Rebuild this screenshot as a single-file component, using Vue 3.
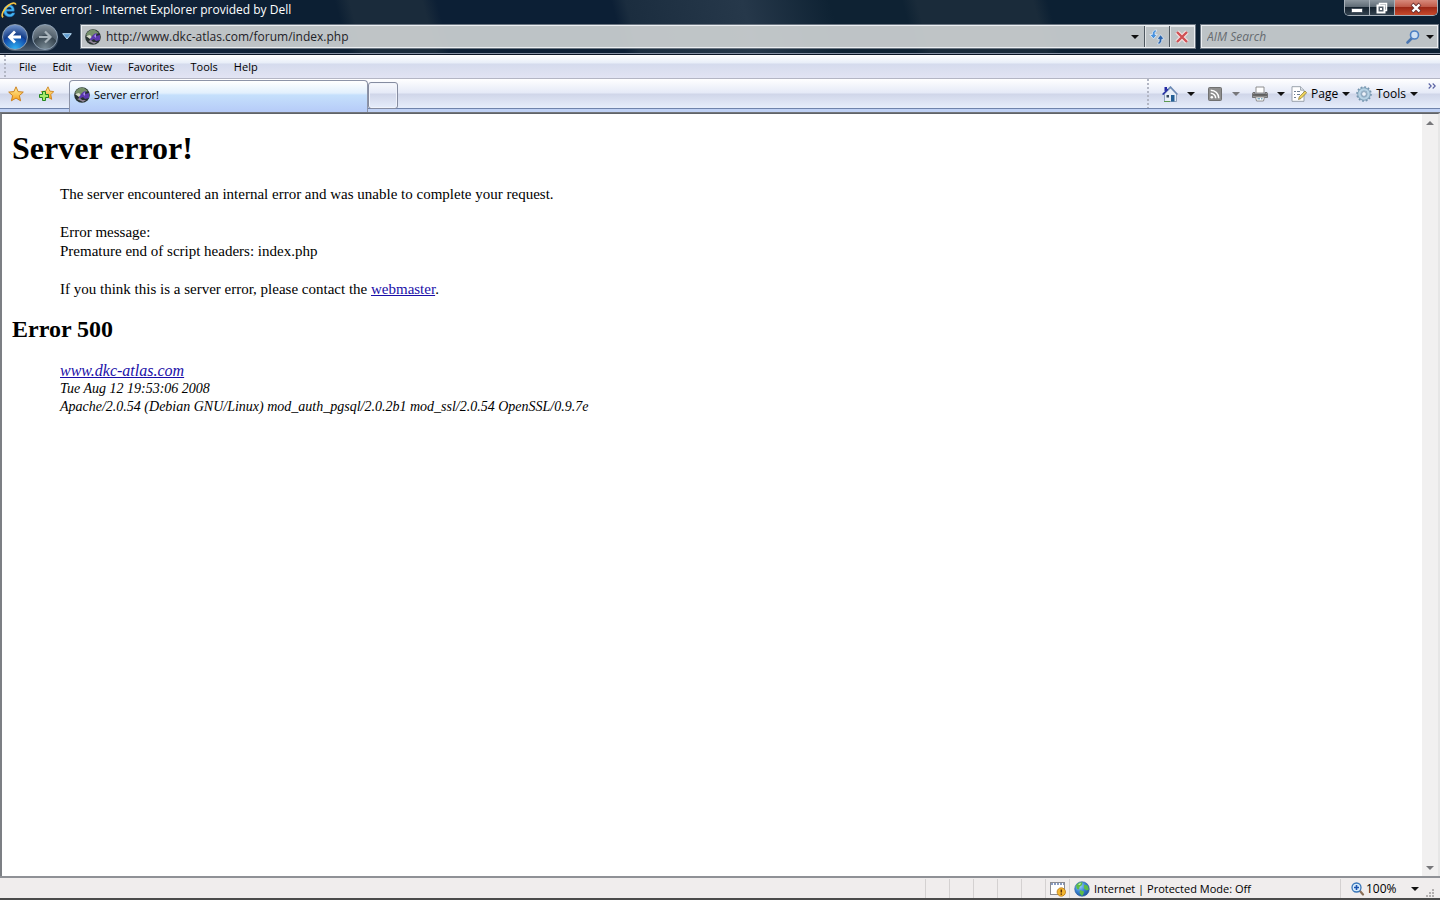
<template>
  <div class="browser">
    <header class="chrome">
      <div class="title-bar">
        <svg class="icon" viewBox="0 0 16 16">
          <path d="M13.2 9.2H5.6c.1 2 1.300 3 3 3 1.200 0 2-.5 2.500-1.300h2.800C13 13.500 11 14.800 8.500 14.800 5 14.800 2.700 12.400 2.700 9c0-3.500 2.400-6 5.700-6 3.400 0 5.300 2.600 4.800 6.200zM5.700 7.300h4.800C10.300 5.800 9.500 5 8.200 5c-1.400 0-2.300.9-2.500 2.300z" fill="#45b6f2" stroke="#1d6fc0" stroke-width=".5" />
          <path d="M2.200 15.300C-.5 13.500 2.500 7 7.500 3.200 11 .6 14.600.2 14.600 2.700" fill="none" stroke="#f5c544" stroke-width="1.700" />
        </svg>
        <h1 class="window-title">Server error! - Internet Explorer provided by Dell</h1>
        <div class="window-buttons">
          <button class="win-btn" aria-label="Minimize">
            <svg width="14" height="12" viewBox="0 0 14 12"><rect x="1.500" y="6.500" width="11" height="4" rx="1" fill="#fff" stroke="#444f5c" /></svg>
          </button>
          <button class="win-btn" aria-label="Restore">
            <svg width="14" height="12" viewBox="0 0 14 12">
              <path d="M4.500 3V1.500h7v7H10" fill="none" stroke="#fff" stroke-width="1.500" />
              <rect x="2.500" y="3.500" width="7" height="7" fill="#56616c" stroke="#fff" stroke-width="2" />
              <rect x="5" y="6" width="2" height="2" fill="#fff" />
            </svg>
          </button>
          <button class="win-btn close" aria-label="Close">
            <svg width="14" height="12" viewBox="0 0 14 12">
              <path d="M3 2l8 8M11 2l-8 8" stroke="#6b3030" stroke-width="4" />
              <path d="M3.500 2.500l7 7M10.500 2.500l-7 7" stroke="#fff" stroke-width="2.400" />
            </svg>
          </button>
        </div>
      </div>

      <div class="nav-bar">
        <div class="travel">
          <button class="round-btn back" aria-label="Back">
            <svg class="icon" viewBox="0 0 16 16"><path d="M8 2.500L2.500 8 8 13.500M3 8h11" fill="none" stroke="#fff" stroke-width="2.800" /></svg>
          </button>
          <button class="round-btn forward" aria-label="Forward">
            <svg class="icon" viewBox="0 0 16 16"><path d="M8 2.500L13.500 8 8 13.500M13 8H2" fill="none" stroke="#a9b4bc" stroke-width="2.200" /></svg>
          </button>
        </div>
        <button class="recent" aria-label="Recent pages">
          <svg width="10" height="7" viewBox="0 0 10 7"><path d="M.7.700h8.600L5 6z" fill="#5e9bd0" stroke="#b9dcf4" /></svg>
        </button>
        <div class="field address-bar">
          <svg class="icon favicon" viewBox="0 0 16 16"><use href="#site-mark" /></svg>
          <input v-model="url" class="url" type="text" aria-label="Address" />
          <button class="drop" aria-label="Show address list"><i class="caret"></i></button>
          <button class="field-btn" aria-label="Refresh">
            <svg class="icon" viewBox="0 0 16 16">
              <path d="M7.500.8C4.800.9 3.200 2.500 3.300 5.500H.8l3.700 4.300 3.700-4.300H6C5.900 3.800 6.300 2.800 7.500 2.300z" fill="#4a92dd" stroke="#edf5fd" stroke-width=".7" />
              <path d="M8.800 15.200c2.700-.1 4.200-1.700 4.100-5h2.300L11.600 5.700 7.900 10.200h2.300c.1 1.900-.2 2.900-1.400 3.500z" fill="#2a64ad" stroke="#edf5fd" stroke-width=".7" />
            </svg>
          </button>
          <button class="field-btn" aria-label="Stop">
            <svg class="icon" viewBox="0 0 16 16">
              <path d="M3 3l10 10M13 3L3 13" stroke="#f5e3e3" stroke-width="4.500" />
              <path d="M3 3l10 10M13 3L3 13" stroke="#cf5054" stroke-width="2.400" />
            </svg>
          </button>
        </div>
        <div class="field search-bar">
          <input v-model="query" class="search" type="text" placeholder="AIM Search" aria-label="Search" />
          <button class="search-btn" aria-label="Go">
            <svg class="icon" viewBox="0 0 16 16">
              <path d="M2.500 13.500l4.500-4.500" stroke="#4b76b0" stroke-width="2.600" stroke-linecap="round" />
              <circle cx="9.500" cy="6" r="4" fill="#cfe0f3" stroke="#4b7fc4" stroke-width="1.600" />
            </svg>
          </button>
          <button class="search-btn options" aria-label="Search options"><i class="caret"></i></button>
        </div>
      </div>
    </header>

    <nav class="menu-bar">
      <i class="grip"></i>
      <button v-for="item in menus" :key="item" class="menu-item">{{ item }}</button>
    </nav>

    <div class="command-bar">
      <div class="favorites">
        <button aria-label="Favorites Center">
          <svg class="icon" viewBox="0 0 16 16"><path d="M8 .8l2.100 4.800 5.200.5-3.900 3.500 1.200 5.200L8 12.100l-4.600 2.700 1.200-5.200L.7 6.100l5.200-.5z" fill="url(#gold)" stroke="#c87812" stroke-width=".9" /></svg>
        </button>
        <button aria-label="Add to Favorites">
          <svg class="icon" viewBox="0 0 16 16">
            <path d="M10 .8l1.800 4.300 4 .5-3 3 .9 4.700L9.500 11l-4.200 2.300.9-4.700-3-3 4.500-.5z" fill="url(#gold)" stroke="#c87812" stroke-width=".8" />
            <path d="M4.500 5.500h3v3h3v3h-3v3h-3v-3h-3v-3h3z" fill="#a7ea6c" stroke="#23871e" />
          </svg>
        </button>
      </div>
      <button class="tab">
        <svg class="icon" viewBox="0 0 16 16"><use href="#site-mark" /></svg>
        <span>Server error!</span>
      </button>
      <button class="new-tab" aria-label="New Tab"></button>
      <div class="tools">
        <i class="grip"></i>
        <div class="icon-tools">
          <button class="tool" aria-label="Home">
            <svg class="icon" viewBox="0 0 16 16">
              <path d="M2.500 1h2.500v4H2.500z" fill="#2429a4" />
              <path d="M2.500 8v7.500h12V8l-6-6z" fill="#e7eef7" stroke="#7c91ae" stroke-width=".8" />
              <path d="M.7 8.500L8.500 1l7 7.500" fill="none" stroke="#6a88b4" stroke-width="1.500" />
              <path d="M.7 8.500L6 3.300" stroke="#2429a4" stroke-width="1.200" />
              <path d="M9 9h3.500v6.500H9z" fill="#235f95" />
              <path d="M4.500 9H7v2.500H4.500z" fill="#35475b" />
              <path d="M2 15.500h6" stroke="#5d9950" />
            </svg>
            <i class="caret"></i>
          </button>
          <button class="tool" aria-label="Feeds" disabled>
            <svg class="icon" viewBox="0 0 16 16">
              <rect x="1.500" y="1.500" width="13" height="13" rx="1" fill="#8e8e8e" stroke="#717171" />
              <circle cx="4.800" cy="11.300" r="1.300" fill="#fff" />
              <path d="M3.700 7.300a5 5 0 015 5M3.700 4.200a8.100 8.100 0 018.100 8.100" fill="none" stroke="#fff" stroke-width="1.500" />
            </svg>
            <i class="caret muted"></i>
          </button>
          <button class="tool" aria-label="Print">
            <svg class="icon" viewBox="0 0 16 16">
              <path d="M4 1h8v6H4z" fill="#fff" stroke="#858585" stroke-width=".9" />
              <path d="M1 6.500h2V8h10V6.500h2l.5 1v4H.5v-4z" fill="#989898" stroke="#555" stroke-width=".7" />
              <path d="M1 9h14" stroke="#474747" stroke-width="1.200" />
              <path d="M3.500 11h9l-1 4h-7z" fill="#fff" stroke="#777" stroke-width=".8" />
              <path d="M5.500 12.800H8M9 12.800h1.500" stroke="#4283a5" />
            </svg>
            <i class="caret"></i>
          </button>
        </div>
        <div class="text-tools">
          <button class="tool labelled">
            <svg class="icon" viewBox="0 0 16 16">
              <path d="M1 .7h8.500L13 4.200v11.100H1z" fill="#fff" stroke="#929aa4" stroke-width=".9" />
              <path d="M9.500.7v3.500H13" fill="#dce2ea" stroke="#929aa4" stroke-width=".8" />
              <path d="M3 5.500h2M6 5.500h3M3 8.500h1M6 8.500h3M3 11.500h2" stroke="#6e7f93" />
              <path d="M7.500 13.500l.7-2.600L14 5l1.700 1.700L10 12.500z" fill="#efd45d" stroke="#82712f" stroke-width=".7" />
            </svg>
            <span>Page</span>
            <i class="caret"></i>
          </button>
          <button class="tool labelled">
            <svg class="icon" viewBox="0 0 16 16">
              <circle cx="8" cy="8" r="6.800" fill="none" stroke="#7494ad" stroke-width="2" stroke-dasharray="1.780 1.780" />
              <circle cx="8" cy="8" r="4.700" fill="none" stroke="#81a2ba" stroke-width="4" />
              <circle cx="8" cy="8" r="4.600" fill="none" stroke="#b8d3e5" stroke-width="2.400" />
              <circle cx="8" cy="8" r="2.400" fill="#edf2fa" stroke="#7292ab" stroke-width=".8" />
            </svg>
            <span>Tools</span>
            <i class="caret"></i>
          </button>
        </div>
        <button class="overflow" aria-label="More commands">
          <svg width="8" height="6" viewBox="0 0 8 6"><path d="M.7.500L3.200 3 .7 5.500M4.700.500L7.200 3 4.700 5.500" fill="none" stroke="#5961a2" stroke-width="1.100" /></svg>
        </button>
      </div>
    </div>

    <div class="viewport">
      <main class="page">
        <h1>Server error!</h1>
        <p>The server encountered an internal error and was unable to complete your request.</p>
        <p>Error message:<br />Premature end of script headers: index.php</p>
        <p>If you think this is a server error, please contact the <a href="#webmaster">webmaster</a>.</p>
        <h2>Error 500</h2>
        <address>
          <a href="#home">www.dkc-atlas.com</a>
          <small>Tue Aug 12 19:53:06 2008<br />Apache/2.0.54 (Debian GNU/Linux) mod_auth_pgsql/2.0.2b1 mod_ssl/2.0.54 OpenSSL/0.9.7e</small>
        </address>
      </main>
      <div class="scroll-bar">
        <button aria-label="Scroll up"><i class="caret up muted"></i></button>
        <button aria-label="Scroll down"><i class="caret muted"></i></button>
      </div>
    </div>

    <footer class="status-bar">
      <div v-for="n in 5" :key="n" class="pane"></div>
      <div class="pane">
        <svg class="icon" viewBox="0 0 16 16">
          <rect x=".5" y="1.500" width="14" height="12" fill="#fff" stroke="#8b8b90" />
          <path d="M1 3h13" stroke="#8a9cc0" stroke-width="2" stroke-dasharray="2 1" />
          <circle cx="11.300" cy="11" r="4.200" fill="#f4b731" stroke="#bb7a13" stroke-width=".8" />
          <path d="M11.300 8.500v3M11.300 12.500v1.300" stroke="#5b2c05" stroke-width="1.500" />
        </svg>
      </div>
      <div class="pane zone">
        <svg class="icon" viewBox="0 0 16 16">
          <circle cx="8" cy="8" r="7.300" fill="url(#ocean)" stroke="#285f9c" stroke-width=".6" />
          <path d="M2 4.500C4 1.500 7 .8 8.500 1.500L8 4 5.500 6 5 8.500 3 8zM10 3.500l3.500 1 1.500 4-2.500 1L10 7.500zM6 9l4 1.500-.5 2.500L8 15l-2.500-3z" fill="#5dbd48" />
          <path d="M4 3.500C5.500 2 7 2 7 2L6 4z" fill="#d1f5bd" />
        </svg>
        <span>Internet | Protected Mode: Off</span>
      </div>
      <div class="pane zoom">
        <svg width="14" height="14" viewBox="0 0 14 14">
          <path d="M8.500 8.500l3.500 4" stroke="#8b7059" stroke-width="2.200" stroke-linecap="round" />
          <circle cx="5.500" cy="5.500" r="4.500" fill="#d9edfc" stroke="#3875b8" stroke-width="1.300" />
          <path d="M3 5.500h5M5.500 3v5" stroke="#1c54b0" stroke-width="1.600" />
        </svg>
        <span>100%</span>
        <button class="drop" aria-label="Change zoom level"><i class="caret"></i></button>
        <svg class="resize" width="9" height="9" viewBox="0 0 9 9"><path d="M7 1h2M4 4h2M7 4h2M1 7h2M4 7h2M7 7h2" stroke="#b3b0b0" stroke-width="2" /></svg>
      </div>
    </footer>

    <!-- shared gradients and the site favicon -->
    <svg class="defs" width="0" height="0" aria-hidden="true">
      <defs>
        <linearGradient id="gold" x1="0" y1="0" x2="0" y2="1">
          <stop offset="0" stop-color="#fff0a0" />
          <stop offset="1" stop-color="#f9a21b" />
        </linearGradient>
        <radialGradient id="ocean" cx=".35" cy=".3" r=".8">
          <stop offset="0" stop-color="#9cd4fb" />
          <stop offset=".5" stop-color="#3a83d3" />
          <stop offset="1" stop-color="#1c4a91" />
        </radialGradient>
        <g id="site-mark">
          <circle cx="8" cy="8" r="7.800" fill="#273231" />
          <path d="M1 6C2 2 6 0 10 1l4 3-5 2-4 2z" fill="#76906a" />
          <path d="M1 7l4-1 3 3-3 1z" fill="#d8dccb" />
          <path d="M5 10l4-5 3-1-1 3 4-1v5l-4 1-2-2-4 2z" fill="#5b38ad" />
          <path d="M9 7l2-2v4z" fill="#aa91ea" />
          <path d="M3 12l3-1 2 2 4 0-3 2z" fill="#8f8295" />
        </g>
      </defs>
    </svg>
  </div>
</template>

<script setup>
import { ref } from 'vue'

const url = ref('http://www.dkc-atlas.com/forum/index.php')
const query = ref('')
const menus = ['File', 'Edit', 'View', 'Favorites', 'Tools', 'Help']
</script>

<style>
body {
  margin: 0;
}
</style>

<style scoped>
.browser {
  display: flex;
  flex-direction: column;
  height: 100vh;
  box-sizing: border-box;
  border-bottom: 2px solid #4b4b4b;
  font: 12px/16px "Open Sans", "Noto Sans", sans-serif;
  color: #000;
  background: #fff;
}
button,
input {
  padding: 0;
  border: 0;
  background: none;
  font: inherit;
  color: inherit;
}
button {
  display: flex;
  align-items: center;
  justify-content: center;
}
input {
  outline: none;
}
svg {
  display: block;
  flex: none;
}
.icon {
  width: 16px;
  height: 16px;
}
.defs {
  position: absolute;
}
.caret {
  flex: none;
  border: 4px solid transparent;
  border-top-color: #111;
  border-bottom: 0;
}
.caret.muted {
  border-top-color: #77777a;
}
.caret.up {
  border-top: 0;
  border-bottom: 4px solid #77777a;
}
.grip {
  width: 2px;
  align-self: stretch;
  background: repeating-linear-gradient(#b2b6c4 0 2px, transparent 2px 4px);
}

/* glass frame */
.chrome {
  flex: none;
  height: 55px;
  box-sizing: border-box;
  border-bottom: 1px solid #0a1424;
  box-shadow: inset 0 -1px #8792a5;
  background: linear-gradient(75deg, #102238 0 16%, #0c1f33 19% 24%, #1a2b3b 25% 30%, #0c1f35 31% 43%, #1b2d3f 44%, #26384a 52%, #0e2233 58% 63%, #1a2b3a 64% 72%, #0c2033 73%);
}
.title-bar {
  display: flex;
  align-items: center;
  height: 20px;
  padding-left: 1px;
}
.window-title {
  margin: 0 auto 0 4px;
  font-size: 12px;
  line-height: 16px;
  font-weight: 400;
  color: #fff;
}
.window-buttons {
  display: flex;
  align-self: flex-start;
  height: 15px;
  margin-right: 2px;
  border: 1px solid #a8b1ba;
  border-top: 0;
  border-radius: 0 0 5px 5px;
  overflow: hidden;
}
.win-btn {
  width: 25px;
  border-right: 1px solid #a8b1ba;
  background: linear-gradient(#8c969f, #5f6b76 45%, #15222f 50%, #33424f);
}
.win-btn.close {
  width: 42px;
  border-right: 0;
  background: linear-gradient(#d78a7c, #c05a49 45%, #9c2817 50%, #c74a2c);
}
.nav-bar {
  display: flex;
  align-items: center;
  height: 33px;
  padding-right: 1px;
}
.travel {
  display: flex;
  gap: 4px;
  margin-left: 1px;
  padding: 1px;
  border-radius: 14px;
  background: linear-gradient(transparent 50%, #526273);
}
.round-btn {
  width: 26px;
  height: 26px;
  border: 1px solid #8fa2b6;
  border-radius: 50%;
}
.back {
  background: radial-gradient(circle at 50% 100%, #31b4f5, #1148a8 50%, #123b85 52%, #8eaee0);
}
.forward {
  background: radial-gradient(circle at 50% 100%, #7c8d98, #36444f 50%, #515f6b 52%, #929ea8);
}
.recent {
  width: 16px;
  height: 24px;
}
.field {
  display: flex;
  box-sizing: border-box;
  height: 25px;
  border: 1px solid #6b7682;
  box-shadow: inset 0 0 0 1px #eceff2;
  background: rgba(205, 209, 211, 0.92);
}
.address-bar {
  flex: 1;
  min-width: 0;
  margin-left: 5px;
  padding: 1px;
}
.favicon {
  margin: 3px;
}
.url {
  flex: 1;
  min-width: 0;
  margin-left: 2px;
  color: #1e2226;
}
.drop {
  width: 18px;
}
.field-btn {
  width: 25px;
  border-left: 1px solid #4f5860;
  box-shadow: inset 1px 1px #e2e5e7;
}
.search-bar {
  flex: 0 0 239px;
  margin-left: 4px;
  padding: 1px;
}
.search {
  flex: 1;
  min-width: 0;
  padding-left: 5px;
}
.search::placeholder {
  color: #666b70;
  font-style: italic;
  opacity: 1;
}
.search-btn {
  width: 20px;
}
.search-btn.options {
  width: 14px;
}

/* menu and command rows */
.menu-bar {
  flex: none;
  display: flex;
  align-items: center;
  height: 24px;
  box-sizing: border-box;
  padding-left: 4px;
  border-bottom: 1px solid #b4b6c4;
  background: linear-gradient(#fff, #e8eef8 8px, #d5dbed 9px, #e2e4f3);
  font-size: 11px;
}
.menu-bar .grip {
  margin-right: 5px;
}
.menu-item {
  padding: 0 8px;
}
.command-bar {
  flex: none;
  display: flex;
  height: 34px;
  box-sizing: border-box;
  border-bottom: 1px solid #73767c;
  background: linear-gradient(#fff, #e5eaf7 14px, #d0d6e9 15px, #e6edfb 29px, #6f83ab 29px 30px, #bfd1f5 30px);
}
.favorites {
  flex: none;
  display: flex;
  gap: 14px;
  width: 69px;
  height: 29px;
  box-sizing: border-box;
  padding-left: 8px;
}
.tab {
  flex: 0 1 299px;
  justify-content: flex-start;
  gap: 4px;
  margin-top: 1px;
  padding: 0 4px 3px;
  border: 1px solid #8d94a8;
  border-bottom: 0;
  border-radius: 4px 4px 0 0;
  background: linear-gradient(#fff, #e2f0fd 12px, #c5e0fc 14px, #b6cbf8);
  font-size: 11px;
}
.new-tab {
  width: 30px;
  height: 27px;
  margin-top: 3px;
  border: 1px solid #858ca0;
  border-radius: 3px;
  box-shadow: inset 0 0 0 1px #f0f3fb;
}
.tools {
  display: flex;
  height: 29px;
  align-items: center;
  margin-left: auto;
}
.icon-tools {
  display: flex;
  gap: 12px;
  margin: 0 6px 0 13px;
}
.tool {
  gap: 9px;
}
.text-tools {
  display: flex;
  gap: 6px;
}
.labelled {
  gap: 4px;
}
.overflow {
  align-self: flex-start;
  margin: 4px 4px 0 10px;
}

/* document */
.viewport {
  flex: 1;
  min-height: 0;
  display: flex;
  border-top: 1px solid #5f6369;
  border-left: 2px solid #7c7f84;
  border-right: 2px solid #e6e6e6;
}
.page {
  flex: 1;
  overflow: hidden;
  padding: 15px 10px;
  font: 15px/19px "Liberation Serif", "Times New Roman", serif;
}
.page h1 {
  margin: 0 0 18px;
  font-size: 32px;
  line-height: 38px;
}
.page h2 {
  margin: 16px 0 19px;
  font-size: 24px;
  line-height: 28px;
}
.page p {
  margin: 0 48px 19px;
}
.page p:last-of-type {
  margin-bottom: 16px;
}
.page address {
  margin: 0 48px;
  font-size: 16px;
  line-height: 18px;
}
.page small {
  display: block;
  font-size: 14px;
}
.page a {
  color: #1a0fa8;
}
.scroll-bar {
  display: flex;
  flex-direction: column;
  justify-content: space-between;
  width: 16px;
  background: #f1f0f0;
}
.scroll-bar button {
  height: 17px;
}

/* status row */
.status-bar {
  flex: none;
  display: flex;
  justify-content: flex-end;
  height: 22px;
  box-sizing: border-box;
  padding-top: 1px;
  border-top: 2px solid #8f9196;
  background: #f0eded;
  font-size: 11px;
}
.pane {
  flex: none;
  display: flex;
  align-items: center;
  width: 24px;
  box-sizing: border-box;
  padding-left: 4px;
  border-left: 1px solid #d4d1d1;
}
.zone {
  width: 271px;
  gap: 4px;
}
.zoom {
  width: 100px;
  padding-left: 10px;
  gap: 1px;
}
.zoom span {
  font-size: 12px;
}
.zoom .drop {
  margin-left: 8px;
}
.resize {
  align-self: flex-end;
}
</style>
